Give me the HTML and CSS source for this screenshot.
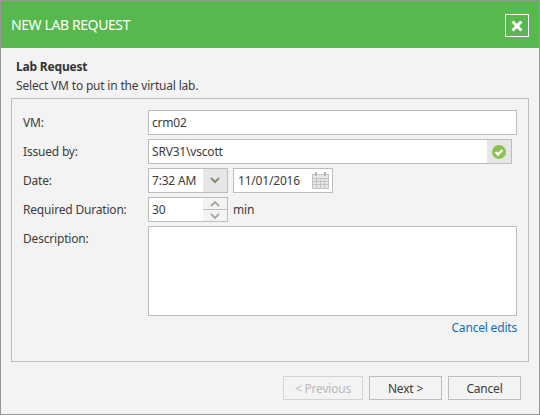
FILE: index.html
```html
<!DOCTYPE html>
<html>
<head>
<meta charset="utf-8">
<title>New Lab Request</title>
<link rel="stylesheet" href="styles.css">
</head>
<body>
<div class="dialog">
  <header class="titlebar">
    <h1 class="title">NEW LAB REQUEST</h1>
    <button class="close" aria-label="Close">
      <svg width="12" height="12" viewBox="0 0 12 12"><path d="M1.5 1.5 L10.5 10.5 M10.5 1.5 L1.5 10.5" stroke="#fff" stroke-width="3" fill="none"/></svg>
    </button>
  </header>
  <div class="intro">
    <div class="heading">Lab Request</div>
    <div class="sub">Select VM to put in the virtual lab.</div>
  </div>
  <section class="panel">
    <div class="row row-vm">
      <label class="label">VM:</label>
      <div class="field field-full">crm02</div>
    </div>
    <div class="row row-issued">
      <label class="label">Issued by:</label>
      <div class="field field-issued">
        <span class="value">SRV31\vscott</span>
        <span class="addon">
          <svg width="14" height="14" viewBox="0 0 14 14"><circle cx="7" cy="7" r="7" fill="#8cc152"/><path d="M3.6 7 L6 9.6 L10.4 5" stroke="#fff" stroke-width="2.4" fill="none"/></svg>
        </span>
      </div>
    </div>
    <div class="row row-date">
      <label class="label">Date:</label>
      <div class="field field-time">
        <span class="value">7:32 AM</span>
        <span class="addon addon-time">
          <svg width="10" height="7" viewBox="0 0 10 7"><path d="M1 1 L5 5 L9 1" stroke="#8a8a72" stroke-width="2" fill="none"/></svg>
        </span>
      </div>
      <div class="field field-date">
        <span class="value">11/01/2016</span>
        <svg class="cal" width="17" height="17" viewBox="0 0 17 17">
          <rect x="0.5" y="2.5" width="16" height="14" fill="#e6e6e6" stroke="#c4c4c4"/>
          <path d="M0 6.5H17M0 9.5H17M0 12.5H17M4.5 6V16M8.5 6V16M12.5 6V16" stroke="#c4c4c4" fill="none"/>
          <rect x="3" y="0" width="2" height="4" fill="#b5b5b5"/>
          <rect x="12" y="0" width="2" height="4" fill="#b5b5b5"/>
        </svg>
      </div>
    </div>
    <div class="row row-duration">
      <label class="label">Required Duration:</label>
      <div class="field field-spin">
        <span class="value">30</span>
        <span class="spin">
          <span class="spin-btn"><svg width="10" height="6" viewBox="0 0 10 6"><path d="M1 5 L5 1 L9 5" stroke="#a9a99a" stroke-width="1.8" fill="none"/></svg></span>
          <span class="spin-btn spin-down"><svg width="10" height="6" viewBox="0 0 10 6"><path d="M1 1 L5 5 L9 1" stroke="#a9a99a" stroke-width="1.8" fill="none"/></svg></span>
        </span>
      </div>
      <span class="unit">min</span>
    </div>
    <div class="row row-desc">
      <label class="label">Description:</label>
      <div class="field field-area"></div>
    </div>
    <div class="links"><a class="link">Cancel edits</a></div>
  </section>
  <footer class="actions">
    <button class="btn btn-prev" disabled>&lt; Previous</button>
    <button class="btn btn-next">Next &gt;</button>
    <button class="btn btn-cancel">Cancel</button>
  </footer>
</div>
</body>
</html>
```

FILE: styles.css
```css
* { box-sizing: border-box; }
html, body { margin: 0; padding: 0; }
body {
  width: 540px;
  height: 415px;
  overflow: hidden;
  font-family: "Noto Sans", "Open Sans", sans-serif;
  font-size: 12px;
  letter-spacing: -0.19px;
  color: #3c3c3c;
}
.dialog {
  width: 540px;
  height: 415px;
  background: #f3f3f3;
  border: 1px solid #979797;
  display: flex;
  flex-direction: column;
}
.titlebar {
  height: 47px;
  background: #56b84d;
  display: flex;
  align-items: center;
  justify-content: space-between;
  padding: 0 10px 0 10px;
}
.title {
  margin: 0;
  font-size: 14px;
  letter-spacing: -0.4px;
  font-weight: 400;
  color: #fff;
}
.close {
  width: 24px;
  height: 23px;
  margin-top: 2px;
  padding: 0;
  background: transparent;
  border: 1px solid #fff;
  display: flex;
  align-items: center;
  justify-content: center;
}
.intro { padding: 9px 15px 0; height: 50px; }
.heading { font-weight: 700; line-height: 20px; color: #333; }
.sub { line-height: 18px; }
.panel {
  margin: 0 10px;
  width: 518px;
  height: 264px;
  border: 1px solid #bdbdbd;
  padding: 11px 11px 0 11px;
  display: flex;
  flex-direction: column;
}
.row { display: flex; align-items: center; }
.row-vm { margin-bottom: 4px; }
.row-issued { margin-bottom: 4px; }
.row-date { margin-bottom: 4px; }
.row-duration { margin-bottom: 4px; }
.row-desc { align-items: flex-start; }
.label { width: 125px; flex: none; }
.row-desc .label { padding-top: 4px; }
.field {
  height: 25px;
  background: #fff;
  border: 1px solid #bdbdbd;
  display: flex;
  align-items: center;
  line-height: 23px;
}
.value { padding-left: 3px; flex: 1; }
.field-full { width: 369px; padding-left: 3px; }
.field-issued { width: 364px; }
.addon {
  width: 24px;
  height: 23px;
  background: #e6e6e6;
  display: flex;
  align-items: center;
  justify-content: center;
}
.field-time { width: 80px; }
.addon-time { width: 24px; }
.field-date { width: 100px; margin-left: 5px; padding-right: 3px; }
.field-date .value { padding-left: 4px; }
.cal { flex: none; }
.field-spin { width: 80px; }
.spin { width: 24px; height: 23px; display: flex; flex-direction: column; background: #f3f3f3; }
.spin-btn { flex: 1; display: flex; align-items: center; justify-content: center; }
.spin-down { border-top: 1px solid #bdbdbd; }
.unit { margin-left: 5px; }
.field-area { width: 369px; height: 90px; }
.links { width: 494px; text-align: right; margin-top: 3px; line-height: 18px; }
.link { color: #0f70b7; }
.actions {
  display: flex;
  justify-content: flex-end;
  gap: 6px;
  padding: 14px 18px 0 0;
}
.btn {
  width: 73px;
  height: 24px;
  padding: 0;
  background: #f3f3f3;
  border: 1px solid #bdbdbd;
  font-family: inherit;
  font-size: 12px;
  letter-spacing: -0.19px;
  color: #3c3c3c;
}
.btn-prev { width: 80px; color: #b9b9b9; border-color: #d4d4d4; }
```
